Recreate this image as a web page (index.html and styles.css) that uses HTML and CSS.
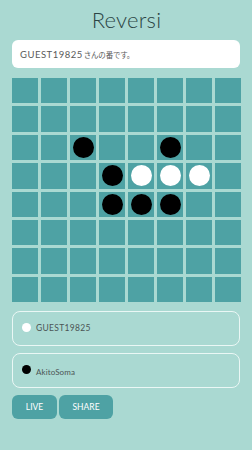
FILE: index.html
```html
<!DOCTYPE html>
<html lang="ja">
<head>
<meta charset="utf-8">
<title>Reversi</title>
<link rel="stylesheet" href="styles.css">
</head>
<body>
<div class="app">
  <h1 class="title">Reversi</h1>
  <div class="message">GUEST19825<span class="ja">さんの番です。</span></div>
  <div class="board">
    <div class="cell"></div><div class="cell"></div><div class="cell"></div><div class="cell"></div><div class="cell"></div><div class="cell"></div><div class="cell"></div><div class="cell"></div>
    <div class="cell"></div><div class="cell"></div><div class="cell"></div><div class="cell"></div><div class="cell"></div><div class="cell"></div><div class="cell"></div><div class="cell"></div>
    <div class="cell"></div><div class="cell"></div><div class="cell"><span class="disc black"></span></div><div class="cell"></div><div class="cell"></div><div class="cell"><span class="disc black"></span></div><div class="cell"></div><div class="cell"></div>
    <div class="cell"></div><div class="cell"></div><div class="cell"></div><div class="cell"><span class="disc black"></span></div><div class="cell"><span class="disc white"></span></div><div class="cell"><span class="disc white"></span></div><div class="cell"><span class="disc white"></span></div><div class="cell"></div>
    <div class="cell"></div><div class="cell"></div><div class="cell"></div><div class="cell"><span class="disc black"></span></div><div class="cell"><span class="disc black"></span></div><div class="cell"><span class="disc black"></span></div><div class="cell"></div><div class="cell"></div>
    <div class="cell"></div><div class="cell"></div><div class="cell"></div><div class="cell"></div><div class="cell"></div><div class="cell"></div><div class="cell"></div><div class="cell"></div>
    <div class="cell"></div><div class="cell"></div><div class="cell"></div><div class="cell"></div><div class="cell"></div><div class="cell"></div><div class="cell"></div><div class="cell"></div>
    <div class="cell"></div><div class="cell"></div><div class="cell"></div><div class="cell"></div><div class="cell"></div><div class="cell"></div><div class="cell"></div><div class="cell"></div>
  </div>
  <div class="player">
    <span class="dot dot-white"></span>
    <span class="name name-1">GUEST19825</span>
  </div>
  <div class="player">
    <span class="dot dot-black"></span>
    <span class="name name-2">AkitoSoma</span>
  </div>
  <div class="actions">
    <button class="btn btn-live">LIVE</button>
    <button class="btn btn-share">SHARE</button>
  </div>
</div>
</body>
</html>
```

FILE: styles.css
```css
html, body {
  margin: 0;
  padding: 0;
  background: #aad9d2;
}
body {
  font-family: Lato, "Noto Sans CJK JP", sans-serif;
  color: #3a4a4a;
}
.app {
  display: flex;
  flex-direction: column;
  padding: 0 11px 0 12px;
}
.title {
  margin: 0;
  height: 40px;
  line-height: 40px;
  text-align: center;
  font-family: Lato, sans-serif;
  font-weight: 300;
  font-size: 22px;
  color: #2a4444;
  letter-spacing: 0.2px;
}
.message {
  width: 228px;
  height: 28px;
  box-sizing: border-box;
  background: #ffffff;
  border-radius: 6px;
  padding: 0 8px;
  display: flex;
  align-items: center;
  font-size: 9.5px;
  font-weight: 400;
  color: #5a5a5a;
  letter-spacing: 0.5px;
}
.ja {
  font-family: "Noto Sans CJK JP", sans-serif;
  font-size: 7.5px;
  font-weight: 400;
  letter-spacing: -0.2px;
  margin-left: 1px;
}
.board {
  margin-top: 10px;
  display: grid;
  grid-template-columns: repeat(8, 26px);
  grid-template-rows: repeat(8, 25.4px);
  gap: 3px;
}
.cell {
  background: #4ea2a4;
  display: flex;
  align-items: center;
  justify-content: center;
}
.disc {
  width: 21px;
  height: 21px;
  border-radius: 50%;
}
.black { background: #000000; }
.white { background: #ffffff; }
.player {
  margin-top: 9px;
  width: 228px;
  height: 35px;
  box-sizing: border-box;
  border: 1px solid #eaf7f5;
  border-radius: 8px;
  display: flex;
  align-items: center;
  padding-left: 9px;
  gap: 5px;
}
.player + .player {
  margin-top: 7px;
}
.dot {
  width: 9px;
  height: 9px;
  border-radius: 50%;
  margin-top: -3px;
}
.dot-white { background: #ffffff; }
.dot-black { background: #000000; }
.name {
  font-size: 8.5px;
  color: #4a5555;
  letter-spacing: 0.3px;
}
.name-1 { margin-top: -1px; }
.name-2 { font-size: 8px; margin-top: 2px; letter-spacing: 0.1px; }
.actions {
  margin-top: 7px;
  display: flex;
  gap: 2px;
}
.btn {
  height: 24px;
  border: none;
  border-radius: 6px;
  background: #4ea2a4;
  color: #ffffff;
  font-family: Lato, sans-serif;
  font-size: 8.5px;
  padding: 0;
}
.btn-live { width: 45px; }
.btn-share { width: 54px; }
```
